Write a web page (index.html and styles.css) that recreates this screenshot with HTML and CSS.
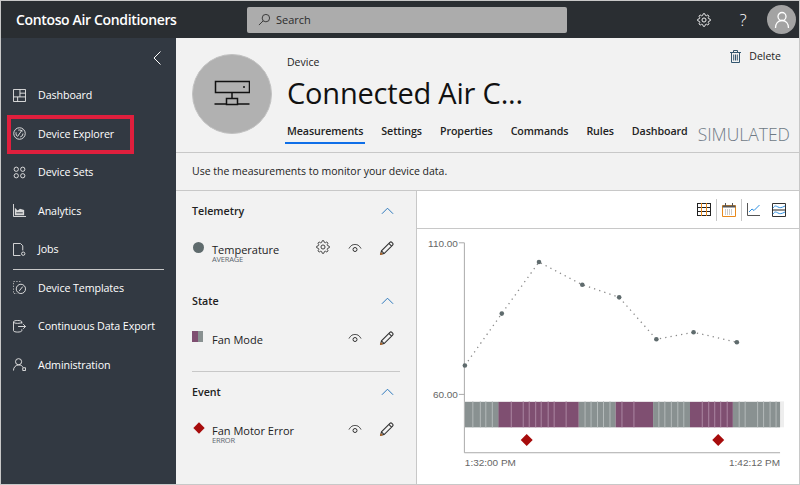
FILE: index.html
```html
<!DOCTYPE html>
<html lang="en">

<head>
    <meta charset="UTF-8">
    <meta name="viewport" content="width=device-width, initial-scale=1.0">
    <title>Contoso Air Conditioners</title>
    <link rel="stylesheet" href="styles.css">
</head>

<body>
    <svg class="defs" width="0" height="0">
        <symbol id="gear" viewBox="0 0 24 24">
            <circle cx="12" cy="12" r="3.5" fill="none" stroke="currentColor" stroke-width="1.6"/>
            <path fill="none" stroke="currentColor" stroke-width="1.6" d="M19.4 15a1.65 1.65 0 0 0 .33 1.82l.06.06a2 2 0 0 1 0 2.83 2 2 0 0 1-2.83 0l-.06-.06a1.65 1.65 0 0 0-1.82-.33 1.65 1.65 0 0 0-1 1.51V21a2 2 0 0 1-2 2 2 2 0 0 1-2-2v-.09A1.65 1.65 0 0 0 9 19.4a1.65 1.65 0 0 0-1.82.33l-.06.06a2 2 0 0 1-2.83 0 2 2 0 0 1 0-2.83l.06-.06a1.65 1.65 0 0 0 .33-1.82 1.65 1.65 0 0 0-1.51-1H3a2 2 0 0 1-2-2 2 2 0 0 1 2-2h.09A1.65 1.65 0 0 0 4.6 9a1.65 1.65 0 0 0-.33-1.82l-.06-.06a2 2 0 0 1 0-2.83 2 2 0 0 1 2.83 0l.06.06a1.65 1.65 0 0 0 1.82.33H9a1.65 1.65 0 0 0 1-1.51V3a2 2 0 0 1 2-2 2 2 0 0 1 2 2v.09a1.65 1.65 0 0 0 1 1.51 1.65 1.65 0 0 0 1.82-.33l.06-.06a2 2 0 0 1 2.83 0 2 2 0 0 1 0 2.83l-.06.06a1.65 1.65 0 0 0-.33 1.82V9a1.65 1.65 0 0 0 1.51 1H21a2 2 0 0 1 2 2 2 2 0 0 1-2 2h-.09a1.65 1.65 0 0 0-1.51 1z"/>
        </symbol>
        <symbol id="eye" viewBox="0 0 14 10">
            <path fill="none" stroke="currentColor" d="M1 5.5C3 2 5 1.5 7 1.5S11 2 13 5.5"/>
            <circle cx="7" cy="6.5" r="2" fill="none" stroke="currentColor"/>
        </symbol>
        <symbol id="pencil" viewBox="0 0 14 14">
            <path fill="none" stroke="currentColor" d="M1.5 12.5l.8-3.3L10.2 1.300a1.300 1.300 0 0 1 1.800 0l.7.7a1.300 1.300 0 0 1 0 1.800L4.800 11.700zM2.300 9.200l2.500 2.500M9.200 2.300l2.500 2.500"/>
            <path fill="#c46a1e" d="M1 13l.7-2.600 1.900 1.900z"/>
        </symbol>
        <symbol id="chevron" viewBox="0 0 14 8">
            <path fill="none" stroke="currentColor" d="M1 7l6-6 6 6"/>
        </symbol>
    </svg>

    <div class="app">
        <header class="topbar">
            <div class="brand">Contoso Air Conditioners</div>
            <div class="search">
                <svg class="search-icon" viewBox="0 0 14 14"><circle cx="8.500" cy="5.500" r="4" fill="none" stroke="#333"/><path d="M5.500 8.500L1 13" stroke="#333" fill="none"/></svg>
                <span>Search</span>
            </div>
            <div class="top-actions">
                <svg class="top-gear"><use href="#gear"/></svg>
                <span class="help">?</span>
                <div class="user">
                    <svg viewBox="0 0 16 18" width="16" height="18"><circle cx="8" cy="5.500" r="4" fill="none" stroke="#fff" stroke-width="1.300"/><path d="M1.500 17c0-4.500 2.500-7.500 6.500-7.500s6.500 3 6.500 7.500" fill="none" stroke="#fff" stroke-width="1.300"/></svg>
                </div>
            </div>
        </header>

        <div class="body-row">
            <nav class="sidebar">
                <div class="collapse">
                    <svg viewBox="0 0 8 14" width="8" height="14"><path d="M7.500 .5L1 7l6.500 6.500" fill="none" stroke="#fff"/></svg>
                </div>
                <a class="nav-item">
                    <svg class="nav-icon" viewBox="0 0 14 14"><path d="M.5 .5h13v13H.5zM7.500 .5v8M.5 8.500h13M5 8.500v5M7.500 4.500h6" fill="none" stroke="#e6e6e6"/></svg>
                    Dashboard
                </a>
                <a class="nav-item selected">
                    <svg class="nav-icon" viewBox="0 0 14 14"><circle cx="7" cy="7" r="6.200" fill="none" stroke="#e6e6e6"/><circle cx="7" cy="7" r="3.800" fill="none" stroke="#e6e6e6" stroke-dasharray="5 3"/><path d="M5 10l5-7" stroke="#e6e6e6" fill="none"/></svg>
                    Device Explorer
                    <span class="highlight"></span>
                </a>
                <a class="nav-item">
                    <svg class="nav-icon" viewBox="0 0 14 14"><g fill="none" stroke="#e6e6e6"><circle cx="3.500" cy="3.500" r="2.300"/><circle cx="10.500" cy="3.500" r="2.300"/><circle cx="3.500" cy="10.500" r="2.300"/><circle cx="10.500" cy="10.500" r="2.300"/></g></svg>
                    Device Sets
                </a>
                <a class="nav-item">
                    <svg class="nav-icon" viewBox="0 0 14 14"><path d="M.5 0v13.500H14" fill="none" stroke="#e6e6e6"/><path d="M2 12V4l3 3 2.500-2 4.500 1.500V12z" fill="#d8d8d8"/><path d="M3.500 9.500h7" stroke="#323942"/></svg>
                    Analytics
                </a>
                <a class="nav-item">
                    <svg class="nav-icon" viewBox="0 0 14 14"><path d="M8 13.500H.5V.5h7.500l2.500 2.500v5" fill="none" stroke="#e6e6e6"/><circle cx="11" cy="11.500" r="1.800" fill="none" stroke="#e6e6e6"/></svg>
                    Jobs
                </a>
                <div class="nav-rule"></div>
                <a class="nav-item">
                    <svg class="nav-icon" viewBox="0 0 14 14"><path d="M8 .5H.5v13h4" fill="none" stroke="#bbb" stroke-dasharray="1.500 1.500"/><circle cx="8.500" cy="8.500" r="5" fill="none" stroke="#e6e6e6"/><path d="M6.500 11l4-5" stroke="#e6e6e6" fill="none"/></svg>
                    Device Templates
                </a>
                <a class="nav-item">
                    <svg class="nav-icon" viewBox="0 0 14 14"><path d="M9.500 4V2C9.500 1 7 .5 5 .5S.5 1 .5 2v9.500c0 1 2.500 1.500 4.500 1.500s4.500-.5 4.500-1.500V10M.5 2.500c1 1.500 8 1.500 9 0M5.500 7h8M11 4.500L13.500 7 11 9.500" fill="none" stroke="#e6e6e6"/></svg>
                    Continuous Data Export
                </a>
                <a class="nav-item">
                    <svg class="nav-icon" viewBox="0 0 14 14"><circle cx="6" cy="4" r="3.300" fill="none" stroke="#e6e6e6"/><path d="M.5 13.500C.5 10 3 7.500 6 7.500s4 1 4.500 2.500" fill="none" stroke="#e6e6e6"/><path d="M10.500 10.500h3v3h-3z" fill="none" stroke="#e6e6e6"/></svg>
                    Administration
                </a>
            </nav>

            <main class="content">
                <section class="device-head">
                    <div class="avatar">
                        <svg viewBox="0 0 36 28" width="36" height="28">
                            <g fill="none" stroke="#111" stroke-width="1.500">
                                <path d="M1.500 1.500h34v11h-34zM18 12.500v6M12.500 18.500h11v6h-11zM.5 24h12M23.500 24h12"/>
                            </g>
                            <circle cx="30" cy="7" r="1" fill="#111"/>
                        </svg>
                    </div>
                    <div class="device-info">
                        <div class="device-label">Device</div>
                        <h1 class="device-name">Connected Air C...</h1>
                        <div class="tabs">
                            <a class="tab active">Measurements</a>
                            <a class="tab">Settings</a>
                            <a class="tab">Properties</a>
                            <a class="tab">Commands</a>
                            <a class="tab">Rules</a>
                            <a class="tab">Dashboard</a>
                            <span class="simulated">SIMULATED</span>
                        </div>
                    </div>
                    <div class="delete">
                        <svg viewBox="0 0 11 13" width="11" height="13"><path d="M1.500 2.500h8v10h-8zM0 2.500h11M3.500 2.500V.5h4v2M3.700 4.500v6M5.500 4.500v6M7.300 4.500v6" fill="none" stroke="#33566f"/></svg>
                        Delete
                    </div>
                </section>

                <p class="hint">Use the measurements to monitor your device data.</p>

                <div class="split">
                    <aside class="measures">
                        <section class="group">
                            <div class="group-head">Telemetry <svg class="chev"><use href="#chevron"/></svg></div>
                            <div class="measure">
                                <span class="dot"></span>
                                <div class="measure-name">Temperature<small>AVERAGE</small></div>
                                <svg class="m-gear"><use href="#gear"/></svg>
                                <svg class="m-eye"><use href="#eye"/></svg>
                                <svg class="m-pencil"><use href="#pencil"/></svg>
                            </div>
                        </section>
                        <section class="group ruled">
                            <div class="group-head">State <svg class="chev"><use href="#chevron"/></svg></div>
                            <div class="measure">
                                <span class="swatch"></span>
                                <div class="measure-name">Fan Mode</div>
                                <svg class="m-eye"><use href="#eye"/></svg>
                                <svg class="m-pencil"><use href="#pencil"/></svg>
                            </div>
                        </section>
                        <section class="group">
                            <div class="group-head">Event <svg class="chev"><use href="#chevron"/></svg></div>
                            <div class="measure">
                                <span class="diamond"></span>
                                <div class="measure-name">Fan Motor Error<small>ERROR</small></div>
                                <svg class="m-eye"><use href="#eye"/></svg>
                                <svg class="m-pencil"><use href="#pencil"/></svg>
                            </div>
                        </section>
                    </aside>

                    <div class="chart-panel">
                        <div class="chart-tools">
                            <svg viewBox="0 0 14 13" width="14" height="13"><path d="M0 .5h14M0 4.500h14M0 8.500h14M0 12.500h14M.5 0v13M13.500 0v13" stroke="#222" fill="none"/><path d="M4.500 0v13M9.500 0v13" stroke="#e8891c" fill="none"/></svg>
                            <span class="tool-rule"></span>
                            <svg viewBox="0 0 14 14" width="14" height="14"><path d="M.5 2.500h13v11H.5z" fill="none" stroke="#e8891c"/><path d="M.5 2.500h13v2H.5z" fill="#555"/><path d="M3.500 0v3M10.500 0v3" stroke="#555"/><path d="M3 7h8M3 9h8M3 11h8" stroke="#999" stroke-dasharray="1 1"/></svg>
                            <span class="tool-rule"></span>
                            <svg viewBox="0 0 13 13" width="13" height="13"><path d="M.5 0v12.500H13" fill="none" stroke="#555"/><path d="M2 9l3-3 2 1.500L12.500 2" fill="none" stroke="#2e8fe0"/></svg>
                            <svg class="tool-wave" viewBox="0 0 14 14" width="14" height="14"><path d="M.5 .5h13v13H.5z" fill="#fff" stroke="#333"/><path d="M0 7h14" stroke="#222"/><path d="M1 5c2-3 3-2 5-1s3 1 7-1M1 11c2-3 3-2 5-1s3 1 7-1" fill="none" stroke="#2e8fe0"/></svg>
                        </div>
                        <svg class="chart" viewBox="416 230 383 254">
                            <g class="axis">
                                <path d="M463.500 243v210.500H780"/>
                                <path d="M458 243h5.500M458 395h5.500"/>
                            </g>
                            <text class="tick" x="457" y="247" text-anchor="end">110.00</text>
                            <text class="tick" x="457" y="399" text-anchor="end">60.00</text>

                            <rect class="band-line" x="464" y="402" width="320" height="26"/>
                            <rect x="464" y="402.500" width="34" height="25.500" fill="#899191"/>
                            <rect x="497.700" y="402.500" width="80.500" height="25.500" fill="#7f4f71"/>
                            <rect x="578.200" y="402.500" width="37" height="25.500" fill="#899191"/>
                            <rect x="615.200" y="402.500" width="37.500" height="25.500" fill="#7f4f71"/>
                            <rect x="652.700" y="402.500" width="37" height="25.500" fill="#899191"/>
                            <rect x="689.700" y="402.500" width="43" height="25.500" fill="#7f4f71"/>
                            <rect x="732.700" y="402.500" width="47.300" height="25.500" fill="#899191"/>
                            <path class="cuts gray" d="M472 402v26M479.500 402v26M485 402v26M491.500 402v26M584.500 402v26M590.500 402v26M597 402v26M603 402v26M609.500 402v26M658.500 402v26M664.500 402v26M671 402v26M677.500 402v26M683.500 402v26M739 402v26M745 402v26M757.500 402v26M763.500 402v26M770 402v26M776 402v26"/>
                            <path class="cuts purple" d="M510.500 402v26M522.500 402v26M528.500 402v26M535 402v26M540.500 402v26M547.500 402v26M553.500 402v26M565.500 402v26M621.500 402v26M633.500 402v26M702 402v26M708.500 402v26M714.500 402v26M720.500 402v26M727 402v26"/>

                            <path class="diamonds" d="M526 434.700l6 6-6 6-6-6zM718 434.700l6 6-6 6-6-6z"/>

                            <polyline class="trend" points="464,366 501,314 538.300,262.300 581.700,285 618.700,297.700 656,339.700 693.300,332.700 736.700,342.700"/>
                            <g class="points">
                                <circle cx="464" cy="366" r="2.300"/>
                                <circle cx="501" cy="314" r="2.300"/>
                                <circle cx="538.300" cy="262.300" r="2.300"/>
                                <circle cx="581.700" cy="285" r="2.300"/>
                                <circle cx="618.700" cy="297.700" r="2.300"/>
                                <circle cx="656" cy="339.700" r="2.300"/>
                                <circle cx="693.300" cy="332.700" r="2.300"/>
                                <circle cx="736.700" cy="342.700" r="2.300"/>
                            </g>

                            <text class="tick" x="464" y="467">1:32:00 PM</text>
                            <text class="tick" x="780" y="467" text-anchor="end">1:42:12 PM</text>
                        </svg>
                    </div>
                </div>
            </main>
        </div>
    </div>
</body>

</html>
```

FILE: styles.css
```css
* {
    box-sizing: border-box;
}

html, body {
    margin: 0;
    height: 100%;
    overflow: hidden;
}

body {
    font-family: "Open Sans", "Noto Sans", sans-serif;
    font-size: 11px;
    color: #222;
    background-color: #f2f2f2;
}

.defs {
    position: absolute;
}

.app {
    width: 800px;
    height: 485px;
    border: 1px solid #c8c8c8;
    display: flex;
    flex-direction: column;
}

/* top bar */
.topbar {
    height: 37px;
    flex: none;
    background-color: #2a2e32;
    display: flex;
    align-items: center;
    padding-right: 3px;
    color: white;
}

.brand {
    width: 246px;
    padding-left: 15px;
    font-size: 14px;
    font-weight: 600;
    letter-spacing: -0.35px;
}

.search {
    width: 320px;
    height: 26px;
    background-color: #acacac;
    border-radius: 2px;
    color: #2b2b2b;
    display: flex;
    align-items: center;
    gap: 5px;
    padding-left: 11px;
    font-size: 11px;
}

.search-icon {
    width: 13px;
    height: 13px;
}

.top-actions {
    margin-left: auto;
    display: flex;
    align-items: center;
}

.top-gear {
    width: 14px;
    height: 14px;
    color: white;
}

.help {
    margin-left: 25px;
    width: 14px;
    text-align: center;
    font-size: 17px;
    font-weight: 300;
    line-height: 20px;
}

.user {
    margin-left: 17px;
    width: 29px;
    height: 29px;
    border-radius: 50%;
    background-color: #a3a3a3;
    display: flex;
    align-items: center;
    justify-content: center;
}

.body-row {
    flex: 1;
    display: flex;
    min-height: 0;
}

/* sidebar */
.sidebar {
    width: 175px;
    flex: none;
    background-color: #323942;
    color: white;
    display: flex;
    flex-direction: column;
}

.collapse {
    height: 38px;
    padding: 13px 15px 0 0;
    display: flex;
    justify-content: flex-end;
}

.nav-item {
    position: relative;
    height: 38.5px;
    flex: none;
    margin-top: 0;
    padding-left: 12px;
    display: flex;
    align-items: center;
    gap: 12px;
    font-size: 10.7px;
    letter-spacing: -0.1px;
}

.nav-icon {
    width: 13px;
    height: 13px;
    flex: none;
}

.nav-rule {
    height: 1px;
    flex: none;
    margin: 0 12px;
    background-color: #c8c8c8;
    margin-bottom: -1px;
}

.highlight {
    position: absolute;
    left: 6px;
    top: 0;
    width: 127px;
    height: 39px;
    border: 4px solid #e01f3d;
}

/* device header */
.content {
    flex: 1;
    min-width: 0;
    display: flex;
    flex-direction: column;
}

.device-head {
    position: relative;
    height: 115px;
    flex: none;
    display: flex;
    padding: 16px 0 0 16px;
    border-bottom: 1px solid #c8c8c8;
}

.avatar {
    width: 80px;
    height: 80px;
    flex: none;
    border-radius: 50%;
    background-color: #b1b1b1;
    border: 1px solid #c2c2c2;
    display: flex;
    align-items: center;
    justify-content: center;
}

.device-info {
    margin-left: 15px;
    flex: 1;
    min-width: 0;
}

.device-label {
    margin-top: 1px;
    line-height: 14px;
    font-size: 10.5px;
}

.device-name {
    margin: 4px 0 0 0;
    font-size: 29px;
    font-weight: 400;
    line-height: 40px;
    letter-spacing: -0.2px;
    color: #111;
}

.tabs {
    margin-top: 9px;
    display: flex;
    gap: 18px;
    align-items: flex-start;
}

.tab {
    font-size: 10.7px;
    line-height: 18px;
    letter-spacing: -0.1px;
    font-weight: 600;
    color: #222;
    height: 22px;
}

.tab.active {
    border-bottom: 2px solid #0f6fe8;
    margin: 0 -2px 0 -2px;
    padding: 0 2px;
    height: 22px;
}

.simulated {
    margin-left: -8px;
    font-size: 17.5px;
    line-height: 24px;
    color: #6f7a85;
    font-weight: 300;
    white-space: nowrap;
}

.delete {
    position: absolute;
    right: 18px;
    top: 11px;
    display: flex;
    align-items: center;
    gap: 8px;
    font-size: 10.5px;
}

.hint {
    margin: 0;
    height: 38px;
    flex: none;
    padding-left: 16px;
    line-height: 37px;
    font-size: 10.5px;
    border-bottom: 1px solid #c8c8c8;
}

/* measures */
.split {
    flex: 1;
    display: flex;
    min-height: 0;
}

.measures {
    width: 240px;
    flex: none;
    padding: 0 16px;
}

.group {
    height: 90px;
}

.group.ruled {
    height: 91px;
    border-bottom: 1px solid #c8c8c8;
    margin-bottom: 0;
}

.group-head {
    height: 40px;
    display: flex;
    align-items: center;
    justify-content: space-between;
    font-weight: 600;
    font-size: 10.7px;
    padding-right: 6px;
}

.chev {
    width: 13px;
    height: 8px;
    color: #1d6fb8;
}

.measure {
    position: relative;
    height: 36px;
    display: flex;
    align-items: center;
    padding-left: 20px;
}

.measure-name {
    font-size: 11px;
    line-height: 13px;
    position: relative;
}

.measure-name small {
    position: absolute;
    left: 0;
    top: 12px;
    font-size: 7.5px;
    line-height: 9px;
    color: #5d6770;
    letter-spacing: -0.2px;
}

.dot {
    position: absolute;
    left: 1px;
    top: 11px;
    width: 11px;
    height: 11px;
    border-radius: 50%;
    background-color: #5f6b6d;
}

.swatch {
    position: absolute;
    left: 0;
    top: 10px;
    width: 11px;
    height: 11px;
    background: linear-gradient(to right, #7f4f71 55%, #899191 55%);
}

.diamond {
    position: absolute;
    left: 3px;
    top: 12px;
    width: 8px;
    height: 8px;
    background-color: #a70c0c;
    transform: rotate(45deg);
}

.m-gear, .m-eye, .m-pencil {
    position: absolute;
    color: #333;
}

.m-gear {
    left: 124px;
    top: 9px;
    width: 14px;
    height: 14px;
}

.m-eye {
    left: 156px;
    top: 12px;
    width: 14px;
    height: 10px;
}

.m-pencil {
    left: 187px;
    top: 10px;
    width: 15px;
    height: 15px;
}

/* chart */
.chart-panel {
    flex: 1;
    min-width: 0;
    background-color: white;
    border-left: 1px solid #c8c8c8;
    display: flex;
    flex-direction: column;
}

.chart-tools {
    height: 38px;
    flex: none;
    border-bottom: 1px solid #c8c8c8;
    display: flex;
    align-items: center;
    justify-content: flex-end;
    padding-right: 13px;
    gap: 5px;
}

.tool-rule {
    width: 1px;
    height: 22px;
    background-color: #c8c8c8;
}

.tool-wave {
    margin-left: 7px;
}

.chart {
    flex: 1;
    width: 100%;
    min-height: 0;
    display: block;
}

.axis path {
    fill: none;
    stroke: #aaa;
}

.tick {
    font-family: "Liberation Sans", sans-serif;
    font-size: 10px;
    fill: #666;
}

.cuts {
    fill: none;
    stroke-width: 1;
}

.cuts.gray {
    stroke: #b4baba;
}

.cuts.purple {
    stroke: #ab87a2;
}

.band-line {
    fill: #eee;
}

.diamonds {
    fill: #a70c0c;
}

.trend {
    fill: none;
    stroke: #8a8a8a;
    stroke-width: 1.300;
    stroke-dasharray: 1.300 4.100;
}

.points circle {
    fill: #5f6b6d;
}
```
